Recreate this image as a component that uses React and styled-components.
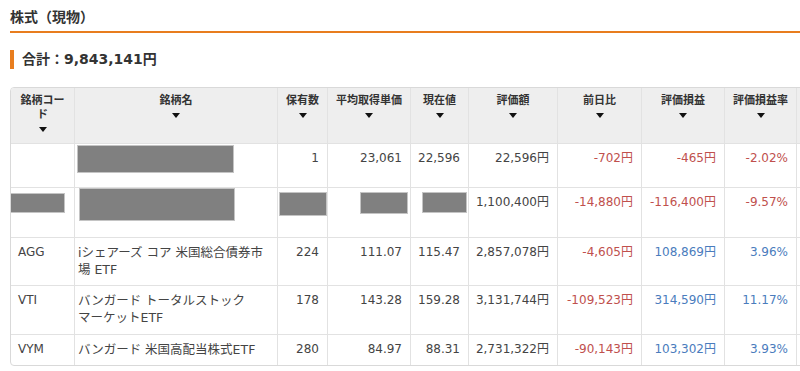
import React from 'react'
import styled, { createGlobalStyle } from 'styled-components'

const GlobalStyle = createGlobalStyle`
  body {
    margin: 0;
    background: #fff;
    overflow: hidden;
    font-family: "DejaVu Sans", "Noto Sans CJK JP", sans-serif;
    color: #444;
  }
`

const ORANGE = '#e87d1e'
const LINE = '#e2e2e2'
const COLS = '64px 203px 50px 83px 58px 89px 84px 83px 72px 90px'

const Page = styled.div`
  width: 900px;
  padding-left: 10px;
`

const Heading = styled.h2`
  margin: 0;
  padding: 8px 0 4px;
  font-size: 14px;
  line-height: 19px;
  font-weight: bold;
  color: #333;
  border-bottom: 2px solid ${ORANGE};
`

const Total = styled.div`
  margin-top: 17px;
  height: 19px;
  line-height: 19px;
  border-left: 4px solid ${ORANGE};
  padding-left: 8px;
  font-size: 14px;
  font-weight: bold;
  color: #333;
`

const TableBox = styled.div`
  margin-top: 18px;
  width: 876px;
  border: 1px solid #d9d9d9;
  border-radius: 4px;
  overflow: hidden;
`

const Row = styled.div`
  display: grid;
  grid-template-columns: ${COLS};
  height: ${p => p.$h}px;
  box-sizing: border-box;
  border-bottom: 1px solid ${LINE};
  &:last-child {
    border-bottom: none;
  }
`

const HeadRow = styled(Row)`
  background: #eeeeee;
`

const Th = styled.div`
  box-sizing: border-box;
  border-right: 1px solid ${LINE};
  padding: 6px 8px 0;
  text-align: center;
  font-size: 11px;
  line-height: 14px;
  font-weight: bold;
  color: #333;
`

const Arrow = styled.span`
  display: flex;
  justify-content: center;
  align-items: center;
  height: 14px;
  &::before {
    content: '';
    border-left: 4.5px solid transparent;
    border-right: 4.5px solid transparent;
    border-top: 5px solid #111;
  }
`

const Td = styled.div`
  position: relative;
  box-sizing: border-box;
  border-right: 1px solid ${LINE};
  padding: 6px 8px 0 ${p => (p.$name ? '3px' : p.$left ? '7px' : '2px')};
  text-align: ${p => (p.$left ? 'left' : 'right')};
  font-size: ${p => (p.$name ? '12.5px' : '12px')};
  line-height: 17px;
  white-space: ${p => (p.$name ? 'pre-line' : 'nowrap')};
  color: ${p => (p.$tone === 'neg' ? '#c0504d' : p.$tone === 'pos' ? '#4a7cbd' : '#444')};
`

const Redact = styled.span`
  position: absolute;
  left: ${p => p.$x}px;
  top: ${p => p.$y}px;
  width: ${p => p.$w}px;
  height: ${p => p.$hh}px;
  background: #808080;
  box-shadow: 0 0 0 1px #c4c4c4;
`

const heads = [
  '銘柄コード',
  '銘柄名',
  '保有数',
  '平均取得単価',
  '現在値',
  '評価額',
  '前日比',
  '評価損益',
  '評価損益率',
  '',
]

const rows = [
  {
    h: 44,
    cells: ['', '', '1', '23,061', '22,596', '22,596円', '-702円', '-465円', '-2.02%'],
    redact: { 1: [3, 2, 155, 26] },
  },
  {
    h: 50,
    cells: ['', '', '', '', '', '1,100,400円', '-14,880円', '-116,400円', '-9.57%'],
    redact: {
      0: [-1, 6, 54, 18],
      1: [5, 1, 154, 31],
      2: [2, 5, 46, 22],
      3: [33, 5, 46, 20],
      4: [12, 5, 43, 19],
    },
  },
  {
    h: 48,
    cells: ['AGG', 'iシェアーズ コア 米国総合債券市\n場 ETF', '224', '111.07', '115.47', '2,857,078円', '-4,605円', '108,869円', '3.96%'],
  },
  {
    h: 49,
    cells: ['VTI', 'バンガード トータルストック\nマーケットETF', '178', '143.28', '159.28', '3,131,744円', '-109,523円', '314,590円', '11.17%'],
  },
  {
    h: 30,
    cells: ['VYM', 'バンガード 米国高配当株式ETF', '280', '84.97', '88.31', '2,731,322円', '-90,143円', '103,302円', '3.93%'],
  },
]

// 前日比・評価損益・評価損益率 are coloured by sign
const toneOf = (i, v) => {
  if (i < 6 || !v) return undefined
  return v.startsWith('-') ? 'neg' : 'pos'
}

export default function App() {
  return (
    <Page>
      <GlobalStyle />
      <Heading>株式（現物）</Heading>
      <Total>合計：9,843,141円</Total>
      <TableBox>
        <HeadRow $h={56}>
          {heads.map((t, i) => (
            <Th key={i}>
              {t}
              {t && <Arrow />}
            </Th>
          ))}
        </HeadRow>
        {rows.map((r, ri) => (
          <Row key={ri} $h={r.h}>
            {[...r.cells, ''].map((v, i) => {
              const red = r.redact && r.redact[i]
              return (
                <Td key={i} $left={i < 2} $name={i === 1} $tone={toneOf(i, v)}>
                  {v}
                  {red && <Redact $x={red[0]} $y={red[1]} $w={red[2]} $hh={red[3]} />}
                </Td>
              )
            })}
          </Row>
        ))}
      </TableBox>
    </Page>
  )
}
